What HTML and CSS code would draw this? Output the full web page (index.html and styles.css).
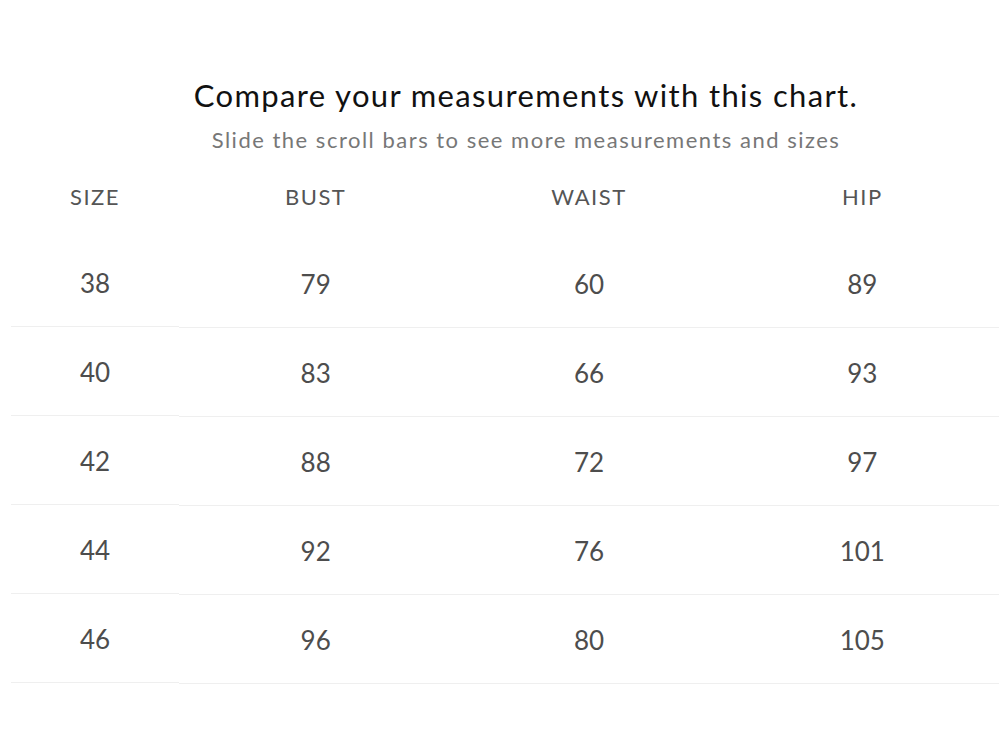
FILE: index.html
```html
<!DOCTYPE html>
<html>
<head>
<meta charset="utf-8">
<link rel="stylesheet" href="styles.css">
</head>
<body>
<div class="page">
  <div class="intro">
    <h1 class="title">Compare your measurements with this chart.</h1>
    <p class="subtitle">Slide the scroll bars to see more measurements and sizes</p>
  </div>
  <div class="chart">
    <div class="fixed-col">
      <div class="cell head">SIZE</div>
      <div class="cell">38</div>
      <div class="cell">40</div>
      <div class="cell">42</div>
      <div class="cell">44</div>
      <div class="cell">46</div>
    </div>
    <div class="scroll-part">
      <div class="row head-row">
        <div class="cell head">BUST</div>
        <div class="cell head">WAIST</div>
        <div class="cell head">HIP</div>
      </div>
      <div class="row"><div class="cell">79</div><div class="cell">60</div><div class="cell">89</div></div>
      <div class="row"><div class="cell">83</div><div class="cell">66</div><div class="cell">93</div></div>
      <div class="row"><div class="cell">88</div><div class="cell">72</div><div class="cell">97</div></div>
      <div class="row"><div class="cell">92</div><div class="cell">76</div><div class="cell">101</div></div>
      <div class="row"><div class="cell">96</div><div class="cell">80</div><div class="cell">105</div></div>
    </div>
  </div>
</div>
</body>
</html>
```
FILE: styles.css
```css
html, body {
  margin: 0;
  padding: 0;
  background: #ffffff;
}

body {
  font-family: "Lato", "Noto Sans", sans-serif;
  color: #4a4a4a;
}

.page {
  padding: 0 9px 0 11px;
}

.intro {
  padding-top: 76px;
  padding-left: 42px;
  text-align: center;
}

.title {
  margin: 0;
  font-size: 31px;
  font-weight: 400;
  line-height: 38px;
  letter-spacing: 1.35px;
  color: #111111;
}

.subtitle {
  margin: 11px 0 0;
  font-size: 22px;
  line-height: 30px;
  letter-spacing: 1.5px;
  color: #777777;
}

.chart {
  display: flex;
  margin-top: 20px;
}

.fixed-col {
  width: 168px;
  flex: none;
}

.scroll-part {
  flex: 1;
}

.row {
  display: grid;
  grid-template-columns: repeat(3, 1fr);
  border-bottom: 1px solid #efefef;
}

.head-row {
  border-bottom-color: transparent;
}

.cell {
  display: flex;
  align-items: center;
  justify-content: center;
  box-sizing: border-box;
  height: 88px;
  padding-top: 2px;
  font-size: 26px;
  color: #4d4d4d;
}

.fixed-col .cell {
  height: 89px;
  border-bottom: 1px solid #efefef;
}

.cell.head {
  height: 63px;
  padding-top: 0;
  padding-bottom: 20px;
  font-size: 22px;
  letter-spacing: 1.5px;
  color: #555555;
}

.fixed-col .cell.head {
  height: 63px;
  border-bottom: none;
}
```
